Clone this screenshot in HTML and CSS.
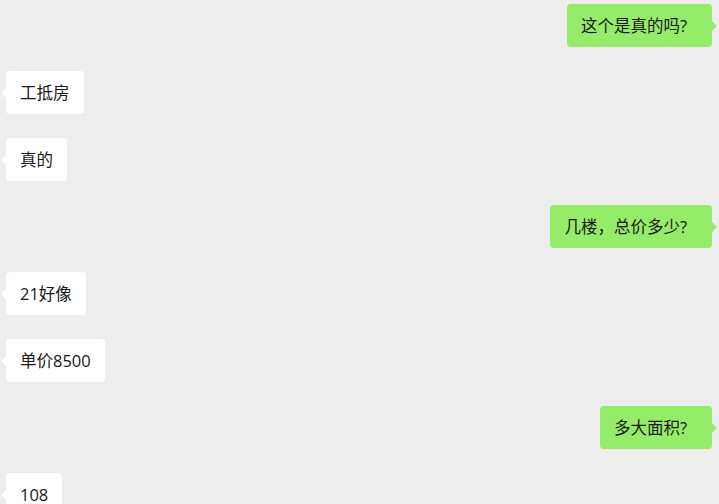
FILE: index.html
```html
<!DOCTYPE html>
<html lang="zh-CN">
<head>
<meta charset="utf-8">
<link rel="stylesheet" href="styles.css">
</head>
<body>
<div class="chat">
  <div class="msg me">这个是真的吗?</div>
  <div class="msg other">工抵房</div>
  <div class="msg other">真的</div>
  <div class="msg me">几楼，总价多少?</div>
  <div class="msg other">21好像</div>
  <div class="msg other">单价8500</div>
  <div class="msg me">多大面积?</div>
  <div class="msg other">108</div>
</div>
</body>
</html>
```
FILE: styles.css
```css
html, body {
  margin: 0;
  padding: 0;
  background: #ededed;
  height: 100%;
  overflow: hidden;
}
.chat {
  display: flex;
  flex-direction: column;
  gap: 24px;
  padding: 4px 7px 0 6px;
  font-family: "Open Sans", "Noto Sans CJK SC", "Microsoft YaHei", sans-serif;
  font-size: 16.5px;
  color: #191919;
}
.msg {
  position: relative;
  padding: 10px 14px;
  line-height: 23px;
  border-radius: 4px;
  white-space: nowrap;
}
.msg.me {
  align-self: flex-end;
  background: #95ec69;
  padding-right: 25px;
}
.msg.other {
  align-self: flex-start;
  background: #ffffff;
}
.msg::after {
  content: "";
  position: absolute;
  top: 50%;
  margin-top: -6px;
  border: 6px solid transparent;
}
.msg.me::after {
  right: -11px;
  border-left-color: #95ec69;
}
.msg.other::after {
  left: -11px;
  border-right-color: #ffffff;
}
```
